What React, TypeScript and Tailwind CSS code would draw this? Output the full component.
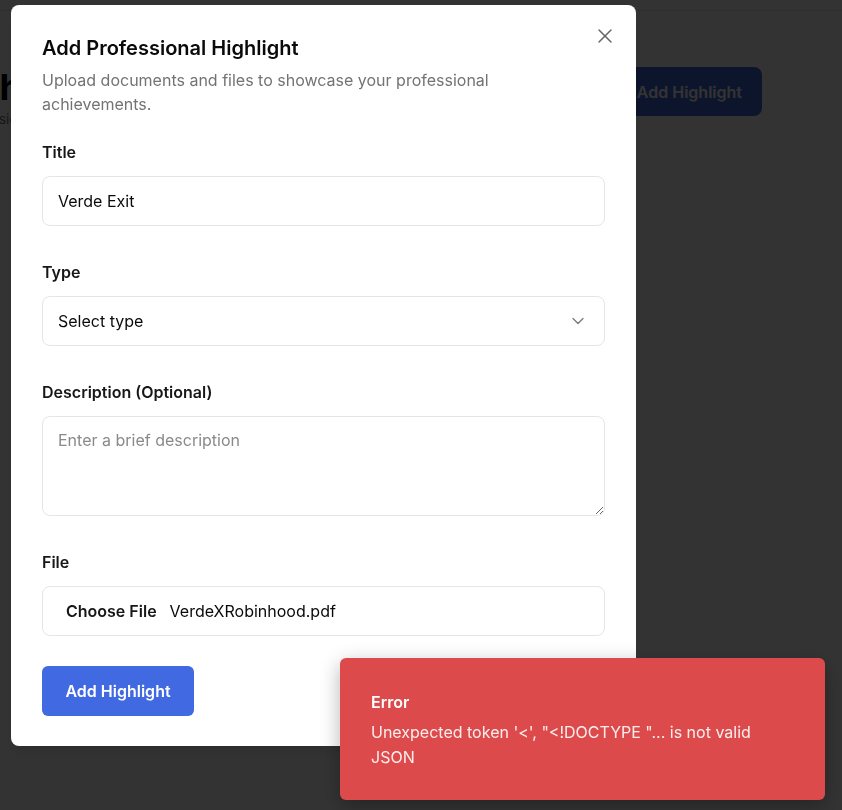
import React from 'react';
import { X, ChevronDown } from 'lucide-react';

const fieldBox = 'h-[50px] w-full rounded-lg border border-[#e5e5e5] bg-white';

function Label({ children }: { children: React.ReactNode }) {
  return <label className="mb-3 block text-base leading-6 font-semibold text-[#171717]">{children}</label>;
}

// page behind the dialog, dimmed by the overlay
function BackgroundPage() {
  return (
    <div className="min-h-screen overflow-hidden bg-white">
      <div className="h-[11px] border-b border-[#e5e5e5]" />
      <div className="flex items-start justify-between pr-[80px] pt-[56px]">
        <div>
          <h1 className="-ml-[60px] text-4xl leading-10 font-bold text-black">Highlights</h1>
          <p className="-ml-[44px] mt-[2px] text-sm text-[#737373]">Professional achievements</p>
        </div>
        <button className="h-[49px] rounded-lg bg-[#4169e1] px-5 text-base font-semibold text-white">
          Add Highlight
        </button>
      </div>
    </div>
  );
}

export default function App() {
  return (
    <div className="relative min-h-screen font-['Inter',sans-serif]">
      <BackgroundPage />
      <div className="fixed inset-0 bg-black/80" />

      <div className="fixed left-[11px] top-[5px] w-[625px] rounded-lg bg-white px-[31px] pt-[29px] pb-[30px] shadow-lg">
        <button type="button" className="absolute right-[19px] top-[19px] text-[#666]">
          <X size={24} strokeWidth={1.5} />
        </button>

        <h2 className="text-[20px] leading-7 font-semibold text-[#0a0a0a]">Add Professional Highlight</h2>
        <p className="mt-[6px] max-w-[470px] text-base leading-6 text-[#737373]">
          Upload documents and files to showcase your professional achievements.
        </p>

        <div className="mt-6 flex flex-col gap-[34px]">
          <div>
            <Label>Title</Label>
            <div className={`${fieldBox} flex items-center pl-[15px] text-base text-[#0a0a0a]`}>Verde Exit</div>
          </div>

          <div>
            <Label>Type</Label>
            <div className={`${fieldBox} flex items-center justify-between pl-[15px] pr-[16px] text-base text-[#0a0a0a]`}>
              <span>Select type</span>
              <ChevronDown size={20} strokeWidth={1.5} className="text-[#777]" />
            </div>
          </div>

          <div>
            <Label>Description (Optional)</Label>
            <textarea
              placeholder="Enter a brief description"
              className="block h-[100px] w-full resize-y rounded-lg border border-[#e5e5e5] px-[15px] py-[11px] text-base leading-6 text-[#0a0a0a] placeholder:text-[#8a8a8a] outline-none"
            />
          </div>

          <div>
            <Label>File</Label>
            <div className={`${fieldBox} flex items-center gap-[13px] pl-[23px] text-base`}>
              <span className="font-semibold text-[#171717]">Choose File</span>
              <span className="text-[#0a0a0a]">VerdeXRobinhood.pdf</span>
            </div>
          </div>
        </div>

        <button
          type="button"
          className="mt-[30px] h-[50px] w-[152px] rounded-md bg-[#4169e1] text-base font-semibold text-white"
        >
          Add Highlight
        </button>
      </div>

      <div className="fixed left-[340px] top-[658px] h-[142px] w-[485px] rounded-md bg-[#dd4a4c] px-[31px] pt-[32px] shadow-[0_6px_20px_rgba(0,0,0,0.3)]">
        <div className="text-base leading-6 font-semibold text-white">Error</div>
        <p className="mt-[6px] max-w-[400px] text-base leading-[25px] text-white/90">
          Unexpected token '&lt;', "&lt;!DOCTYPE "... is not valid JSON
        </p>
      </div>
    </div>
  );
}
